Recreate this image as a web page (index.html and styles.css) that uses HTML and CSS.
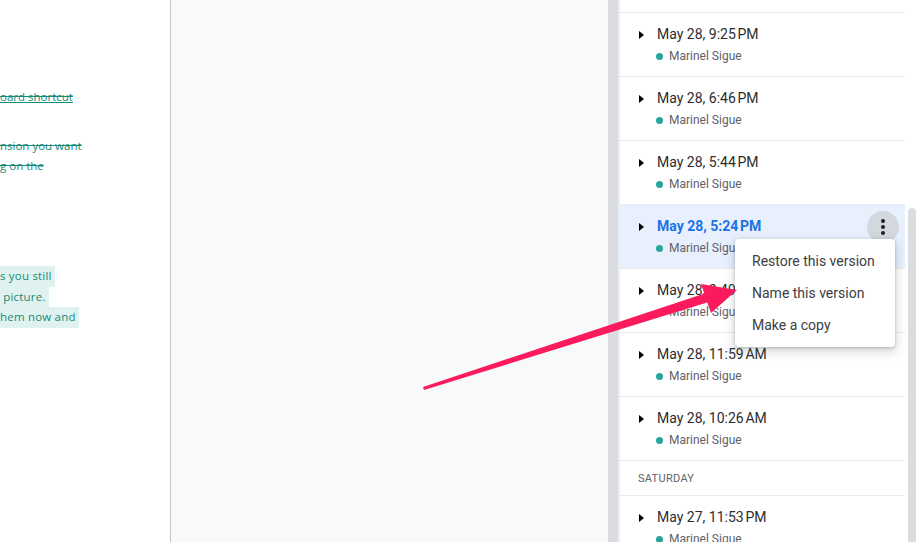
FILE: index.html
```html
<!DOCTYPE html>
<html lang="en">
<head>
  <meta charset="UTF-8">
  <meta name="viewport" content="width=device-width, initial-scale=1.0">
  <title>Version history</title>
  <link rel="stylesheet" href="styles.css">
</head>
<body>
  <div class="screen">
    <div class="doc">
      <div class="doc-lines first">
        <span class="struck under">oard shortcut</span>
      </div>
      <div class="doc-lines second">
        <span class="struck">nsion you want</span>
        <span class="struck">g on the</span>
      </div>
      <div class="doc-lines third">
        <span class="marked">s you still</span>
        <span class="marked">&nbsp;picture.</span>
        <span class="marked">hem now and</span>
      </div>
    </div>

    <div class="canvas"></div>
    <div class="gutter"></div>

    <div class="panel">
      <ul class="versions">
        <li class="version">
          <div class="when"><span class="caret"></span>May 28, 9:25&#8239;PM</div>
          <div class="who"><span class="dot"></span>Marinel Sigue</div>
        </li>
        <li class="version">
          <div class="when"><span class="caret"></span>May 28, 6:46&#8239;PM</div>
          <div class="who"><span class="dot"></span>Marinel Sigue</div>
        </li>
        <li class="version">
          <div class="when"><span class="caret"></span>May 28, 5:44&#8239;PM</div>
          <div class="who"><span class="dot"></span>Marinel Sigue</div>
        </li>
        <li class="version selected">
          <div class="when"><span class="caret"></span>May 28, 5:24&#8239;PM</div>
          <div class="who"><span class="dot"></span>Marinel Sigue</div>
          <button class="more" type="button">
            <svg width="4" height="16" viewBox="0 0 4 16"><circle cx="2" cy="2" r="2"/><circle cx="2" cy="8" r="2"/><circle cx="2" cy="14" r="2"/></svg>
          </button>
        </li>
        <li class="version">
          <div class="when"><span class="caret"></span>May 28, 2:49&#8239;PM</div>
          <div class="who"><span class="dot"></span>Marinel Sigue</div>
        </li>
        <li class="version">
          <div class="when"><span class="caret"></span>May 28, 11:59&#8239;AM</div>
          <div class="who"><span class="dot"></span>Marinel Sigue</div>
        </li>
        <li class="version">
          <div class="when"><span class="caret"></span>May 28, 10:26&#8239;AM</div>
          <div class="who"><span class="dot"></span>Marinel Sigue</div>
        </li>
        <li class="day">Saturday</li>
        <li class="version">
          <div class="when"><span class="caret"></span>May 27, 11:53&#8239;PM</div>
          <div class="who"><span class="dot"></span>Marinel Sigue</div>
        </li>
      </ul>

      <div class="menu">
        <div class="menu-item">Restore this version</div>
        <div class="menu-item">Name this version</div>
        <div class="menu-item">Make a copy</div>
      </div>
    </div>

    <div class="scroll"><div class="thumb"></div></div>

    <svg class="arrow" width="920" height="542" viewBox="0 0 920 542">
      <polygon points="423,387 424,390 712,301 709,292" fill="#fb1b5d"/>
      <polygon points="737,290 701,284 711,313" fill="#fb1b5d"/>
    </svg>
  </div>
</body>
</html>
```

FILE: styles.css
```css
body {
  margin: 0;
  font-family: Roboto, "Liberation Sans", sans-serif;
  background: #fff;
}

.screen {
  position: relative;
  display: flex;
  width: 920px;
  height: 542px;
  overflow: hidden;
}

/* document page on the left */
.doc {
  width: 170px;
  flex: none;
  border-right: 1px solid #c6c6c6;
  background: #fff;
  font-family: "Open Sans", "Liberation Sans", sans-serif;
  font-size: 11.5px;
  color: #178a78;
}

.doc-lines {
  display: flex;
  flex-direction: column;
  align-items: flex-start;
  line-height: 20px;
}

.doc-lines.first { margin-top: 87px; }
.doc-lines.second { margin-top: 29px; }
.doc-lines.third { margin-top: 90px; line-height: 20.5px; }

.struck { text-decoration: line-through; }
.struck.under { text-decoration: line-through underline; }

.marked {
  background: #dff2ef;
  padding-right: 3px;
  letter-spacing: 0.2px;
}

.canvas {
  flex: 1;
  background: #f8f9fa;
}

.gutter {
  width: 10px;
  flex: none;
  background: #dadce0;
  border-right: 2px solid #eceef1;
}

/* version history panel */
.panel {
  position: relative;
  width: 285px;
  flex: none;
  background: #fff;
  padding-top: 12px;
}

.versions {
  list-style: none;
  margin: 0;
  padding: 0;
  border-top: 1px solid #e8eaed;
}

.version {
  position: relative;
  height: 63px;
  box-sizing: content-box;
  padding: 0 0 0 19px;
  border-bottom: 1px solid #e8eaed;
}

.when {
  display: flex;
  align-items: center;
  padding-top: 11px;
  height: 20px;
  font-size: 14px;
  color: #2b2d30;
}

.caret {
  width: 0;
  height: 0;
  border-top: 4px solid transparent;
  border-bottom: 4px solid transparent;
  border-left: 5px solid #000;
  margin: 1px 13px 0 0;
}

.who {
  display: flex;
  align-items: center;
  margin-top: 4px;
  padding-left: 17px;
  height: 16px;
  font-size: 12px;
  color: #5f6368;
}

.dot {
  width: 7px;
  height: 7px;
  border-radius: 50%;
  background: #26a69a;
  margin-right: 6px;
}

.version.selected {
  background: #e8f0fe;
}

.version.selected .when {
  color: #1a73e8;
  font-weight: 700;
}

.more {
  position: absolute;
  top: 6px;
  right: 6px;
  width: 32px;
  height: 32px;
  border: none;
  border-radius: 50%;
  background: #d3d7de;
  display: flex;
  align-items: center;
  justify-content: center;
  padding: 0;
}

.more svg { fill: #202124; }

.day {
  height: 34px;
  padding-left: 18px;
  line-height: 35px;
  font-size: 11px;
  color: #5f6368;
  text-transform: uppercase;
  letter-spacing: 0.3px;
  border-bottom: 1px solid #e8eaed;
}

.menu {
  position: absolute;
  left: 115px;
  top: 239px;
  width: 160px;
  padding: 6px 0;
  background: #fff;
  border-radius: 4px;
  box-shadow: 0 1px 3px rgba(60, 64, 67, 0.3), 0 4px 8px 3px rgba(60, 64, 67, 0.15);
}

.menu-item {
  height: 32px;
  line-height: 32px;
  padding-left: 17px;
  font-size: 14px;
  color: #3c4043;
}

.scroll {
  width: 15px;
  flex: none;
  background: #fff;
}

.thumb {
  width: 8px;
  margin: 208px 0 0 3px;
  height: 340px;
  border-radius: 4px;
  background: #dadce0;
}

.arrow {
  position: absolute;
  left: 0;
  top: 0;
  pointer-events: none;
}
```
